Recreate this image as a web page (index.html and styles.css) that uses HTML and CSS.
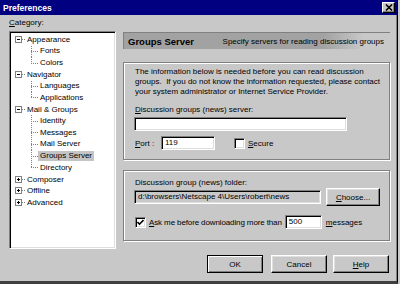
FILE: index.html
```html
<!DOCTYPE html>
<html lang="en">
<head>
    <meta charset="UTF-8">
    <title>Preferences</title>
    <link rel="stylesheet" href="styles.css">
</head>
<body>
    <div class="window">
        <div class="titlebar">
            <span class="title">Preferences</span>
            <span class="close-btn">
                <svg width="8" height="7" viewBox="0 0 8 7"><path d="M1 0.5 L7 6.5 M7 0.5 L1 6.5" stroke="#000" stroke-width="1.6"/></svg>
            </span>
        </div>

        <div class="content">
            <aside class="sidebar">
                <div class="label"><u>C</u>ategory:</div>
                <ul class="tree">
                    <li>
                        <div class="node"><span class="exp"></span><span class="stub"></span>Appearance</div>
                        <ul class="children">
                            <li><span class="txt">Fonts</span></li>
                            <li><span class="txt">Colors</span></li>
                        </ul>
                    </li>
                    <li>
                        <div class="node"><span class="exp"></span><span class="stub"></span>Navigator</div>
                        <ul class="children">
                            <li><span class="txt">Languages</span></li>
                            <li><span class="txt">Applications</span></li>
                        </ul>
                    </li>
                    <li>
                        <div class="node"><span class="exp"></span><span class="stub"></span>Mail &amp; Groups</div>
                        <ul class="children">
                            <li><span class="txt">Identity</span></li>
                            <li><span class="txt">Messages</span></li>
                            <li><span class="txt">Mail Server</span></li>
                            <li><span class="txt selected">Groups Server</span></li>
                            <li><span class="txt">Directory</span></li>
                        </ul>
                    </li>
                    <li><div class="node"><span class="exp closed"></span><span class="stub"></span>Composer</div></li>
                    <li><div class="node"><span class="exp closed"></span><span class="stub"></span>Offline</div></li>
                    <li><div class="node"><span class="exp closed"></span><span class="stub"></span>Advanced</div></li>
                </ul>
            </aside>

            <main class="main">
                <header class="panel-head">
                    <h1>Groups Server</h1>
                    <span class="panel-desc">Specify servers for reading discussion groups</span>
                </header>

                <section class="group group-server">
                    <p class="info">The information below is needed before you can read discussion groups.&nbsp; If you do not know the information requested, please contact your system administrator or Internet Service Provider.</p>
                    <div class="field-label"><u>D</u>iscussion groups (news) server:</div>
                    <div class="input server-input"></div>
                    <div class="port-row">
                        <span class="port-label"><u>P</u>ort :</span>
                        <div class="input port-input">119</div>
                        <span class="check"></span>
                        <span><u>S</u>ecure</span>
                    </div>
                </section>

                <section class="group group-folder">
                    <div class="field-label">Discussion group (news) folder:</div>
                    <div class="folder-row">
                        <div class="input readonly folder-input">d:\browsers\Netscape 4\Users\robert\news</div>
                        <button class="btn choose-btn"><u>C</u>hoose...</button>
                    </div>
                    <div class="ask-row">
                        <span class="check checked">
                            <svg width="7" height="7" viewBox="0 0 7 7"><path d="M0.5 3 L2.5 5.2 L6.5 1" fill="none" stroke="#000" stroke-width="1.6"/></svg>
                        </span>
                        <span class="ask-label"><u>A</u>sk me before downloading more than</span>
                        <div class="input count-input">500</div>
                        <span><u>m</u>essages</span>
                    </div>
                </section>
            </main>
        </div>

        <footer class="footer">
            <button class="btn default">OK</button>
            <button class="btn">Cancel</button>
            <button class="btn help-btn"><u>H</u>elp</button>
        </footer>
    </div>
</body>
</html>
```

FILE: styles.css
```css
:root {
    --face: #c8c8c8; --shadow: #808080; --dark: #000; --light: #fff; --soft: #dfdfdf;
    --title: #000080; --font: "Liberation Sans", Arial, sans-serif;
}
* { margin: 0; padding: 0; box-sizing: border-box; }
body { width: 400px; height: 284px; overflow: hidden; background: var(--face); font-family: var(--font); font-size: 8px; color: #000; }
u { text-decoration: underline; text-underline-offset: 1px; }

.window { width: 398px; height: 284px; display: flex; flex-direction: column; background: var(--face); border-right: 1px solid var(--dark); border-bottom: 3px solid #404040; box-shadow: inset -1px 0 var(--shadow); }

/* title bar */
.titlebar { height: 15px; flex: none; display: flex; align-items: center; justify-content: space-between; padding: 0 2px 0 3px; background: var(--title); color: #fff; }
.title { font-weight: bold; font-size: 8.5px; }
.close-btn { width: 13px; height: 11px; display: flex; align-items: center; justify-content: center; background: var(--face); border: 1px solid; border-color: var(--light) var(--dark) var(--dark) var(--light); box-shadow: inset -1px -1px var(--shadow); }

/* layout */
.content { height: 234px; flex: none; display: flex; padding: 1px 7px 0 9px; }
.sidebar { width: 107px; flex: none; display: flex; flex-direction: column; }
.label { height: 15px; padding-top: 2px; line-height: 10px; }
.main { flex: 1; margin-left: 7px; padding-top: 16px; display: flex; flex-direction: column; }

/* tree */
.tree { height: 218px; list-style: none; background: #fff; border: 1px solid; border-color: var(--shadow) var(--light) var(--light) var(--shadow); box-shadow: inset 1px 1px var(--dark), inset -1px -1px var(--soft); padding: 2px 0 0 5px; }
.node { height: 11.64px; display: flex; align-items: center; white-space: nowrap; }
.exp { width: 7px; height: 7px; flex: none; border: 1px solid var(--shadow); background: linear-gradient(#000, #000) center / 3px 1px no-repeat, #fff; }
.exp.closed { background: linear-gradient(#000, #000) center / 3px 1px no-repeat, linear-gradient(#000, #000) center / 1px 3px no-repeat, #fff; }
.stub { width: 4px; height: 1px; flex: none; margin-right: 1px; background: repeating-linear-gradient(to right, var(--shadow) 0 1px, transparent 1px 2px); }
.children { list-style: none; margin-left: 16px; }
.children li { height: 11.64px; display: flex; align-items: center; padding-left: 7px; white-space: nowrap;
    background:
        repeating-linear-gradient(to bottom, var(--shadow) 0 1px, transparent 1px 2px) 0 0 / 1px 100% no-repeat,
        repeating-linear-gradient(to right, var(--shadow) 0 1px, transparent 1px 2px) 0 50% / 7px 1px no-repeat; }
.children li:last-child { background:
        repeating-linear-gradient(to bottom, var(--shadow) 0 1px, transparent 1px 2px) 0 0 / 1px 50% no-repeat,
        repeating-linear-gradient(to right, var(--shadow) 0 1px, transparent 1px 2px) 0 50% / 7px 1px no-repeat; }
.txt { padding: 0 2px; line-height: 10px; }
.txt.selected { background: #c4c4c4; }

/* panel header */
.panel-head { height: 17px; flex: none; display: flex; align-items: center; justify-content: space-between; padding: 0 6px 0 4px; border-top: 1px solid var(--shadow); border-left: 1px solid var(--shadow); background: linear-gradient(to right, #a2a2a2 0, #a2a2a2 75%, var(--face) 90%); }
.panel-head h1 { font-size: 9.5px; font-weight: bold; }

/* group boxes */
.group { flex: none; border: 1px solid var(--shadow); box-shadow: inset 1px 1px var(--light), 1px 1px var(--light); padding: 0 0 0 11px; }
.group-server { height: 98px; margin-top: 13px; padding-top: 4px; }
.group-folder { height: 71px; margin-top: 10px; padding-top: 7px; }
.info { line-height: 10px; width: 250px; }
.field-label { line-height: 10px; }
.group-server .field-label { margin-top: 8px; }

.input { height: 14px; line-height: 12px; padding-left: 3px; background: #fff; border: 1px solid; border-color: var(--shadow) var(--light) var(--light) var(--shadow); box-shadow: inset 1px 1px var(--dark), inset -1px -1px var(--soft); white-space: nowrap; }
.input.readonly { background: var(--face); }
.server-input { width: 213px; margin-top: 2px; margin-left: -1px; }
.port-row { display: flex; align-items: center; margin-top: 5px; }
.port-label { width: 26px; }
.port-input { width: 54px; }
.port-row .check { margin-left: 19px; margin-right: 3px; }

.check { width: 11px; height: 11px; flex: none; display: flex; align-items: center; justify-content: center; background: #fff; border: 1px solid; border-color: var(--shadow) var(--light) var(--light) var(--shadow); box-shadow: inset 1px 1px var(--dark), inset -1px -1px var(--soft); }

.folder-row { display: flex; align-items: center; height: 18px; }
.folder-input { width: 187px; margin-left: -1px; }
.choose-btn { width: 54px; margin-left: 5px; }
.ask-row { display: flex; align-items: center; margin-top: 9px; }
.ask-row .check { margin-right: 3px; }
.ask-label { letter-spacing: -0.12px; }
.count-input { width: 37px; margin: 0 4px 0 3px; }

/* buttons */
.btn { height: 18px; font-family: var(--font); font-size: 8px; color: #000; background: var(--face); border: 1px solid; border-color: var(--light) var(--dark) var(--dark) var(--light); box-shadow: inset -1px -1px var(--shadow), inset 1px 1px var(--soft); }
.btn.default { outline: 1px solid var(--dark); outline-offset: -1px; border-color: #000; box-shadow: inset 1px 1px var(--light), inset -1px -1px var(--shadow); }
.footer { flex: 1; display: flex; justify-content: flex-end; align-items: flex-start; gap: 8px; padding: 6px 8px 0 0; }
.footer .btn { width: 56px; }
.footer .help-btn { margin-left: -2px; }
```
